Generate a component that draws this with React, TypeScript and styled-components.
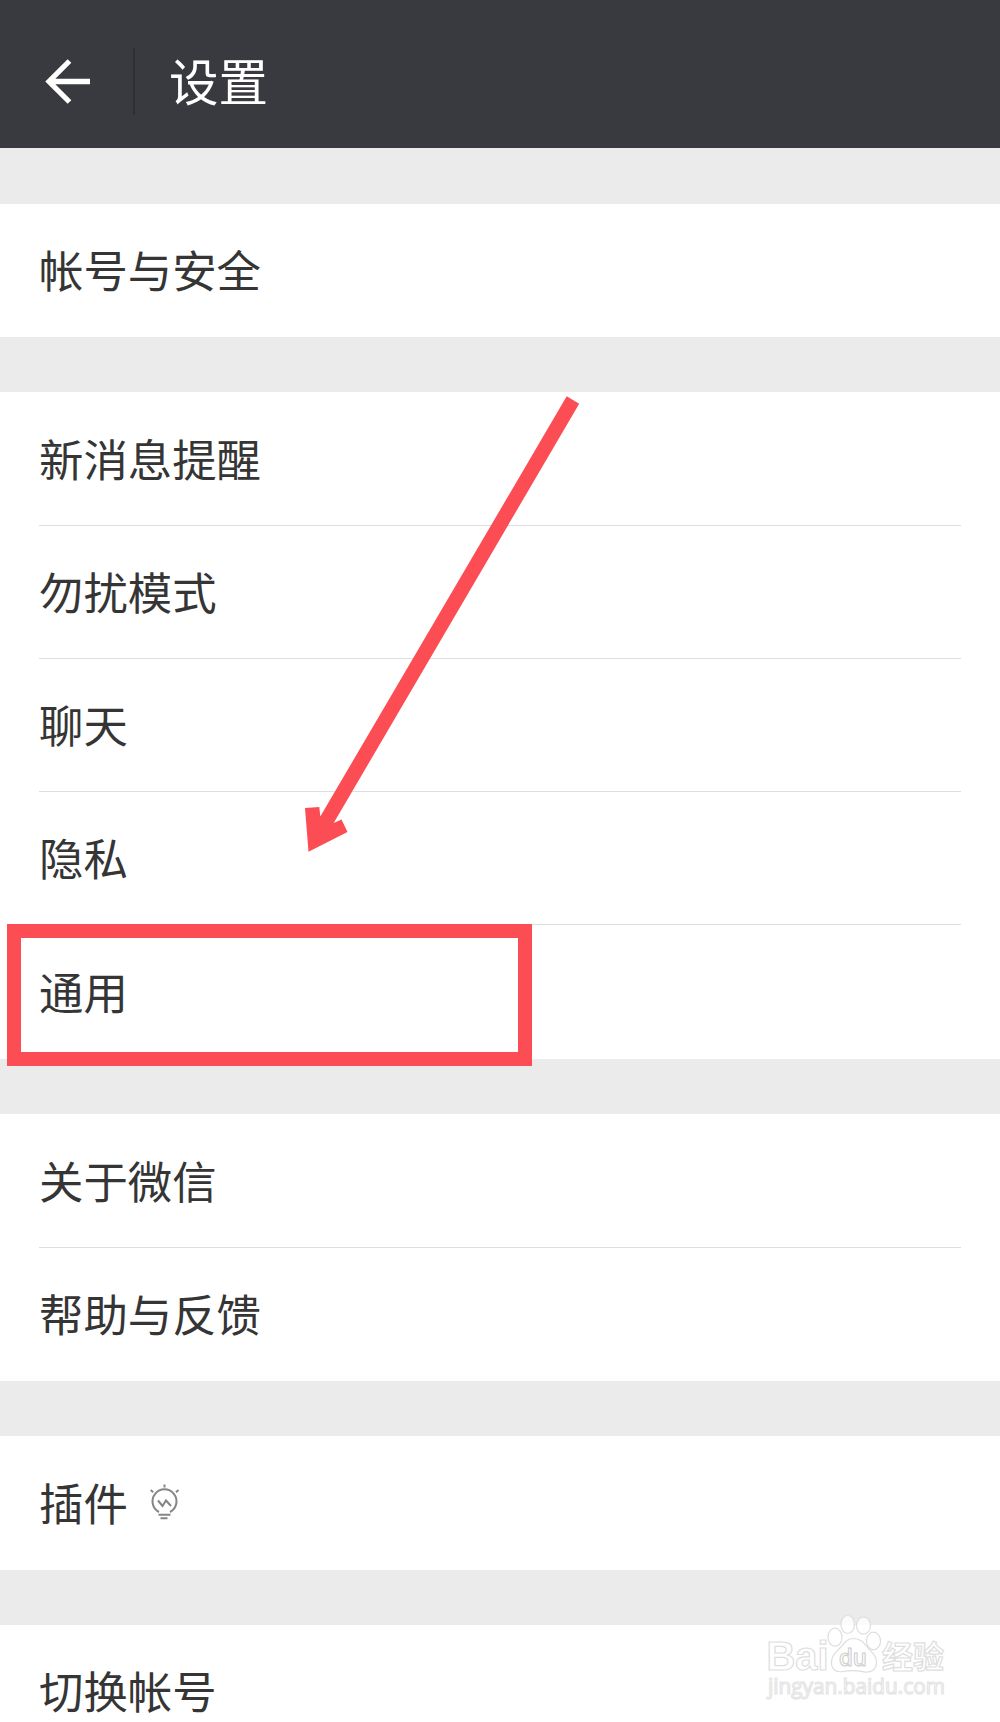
import React from "react";
import styled, { createGlobalStyle } from "styled-components";

const Global = createGlobalStyle`
  body { margin: 0; background: #ebebeb; overflow: hidden; }
  * { box-sizing: border-box; }
`;

const Screen = styled.div`
  position: relative;
  width: 1000px;
  height: 1722px;
  overflow: hidden;
  background: #ebebeb;
  color: #353535;
  font-family: "Noto Sans CJK SC", sans-serif;
`;

const Header = styled.header`
  display: flex;
  align-items: center;
  height: 148px;
  padding: 14px 0 0 45px;
  background: #393a3f;
  color: #fff;
`;

const BackIcon = styled.svg`
  width: 46px;
  height: 46px;
  flex: none;
`;

const HeaderDivider = styled.span`
  width: 2px;
  height: 67px;
  margin: 0 34px 0 42px;
  background: #2e2f33;
`;

const Title = styled.h1`
  margin: 0;
  padding-bottom: 2px;
  font-size: 49.5px;
  font-weight: 400;
  line-height: 66px;
`;

const List = styled.main`
  display: flex;
  flex-direction: column;
  gap: 55.6px;
  padding-top: 55.6px;
`;

const Group = styled.section`
  flex: none;
  padding: 0 39px;
  background: #fff;
`;

const Row = styled.div`
  display: flex;
  align-items: center;
  gap: 21.5px;
  height: 133.25px;
  padding-bottom: 1.8px;
  border-bottom: 1px solid #dedede;
  font-size: 44.4px;
  line-height: 60px;
  &:last-child { border-bottom-color: transparent; }
`;

const Bulb = styled.svg`
  width: 32px;
  height: 38px;
  flex: none;
`;

const Highlight = styled.div`
  position: absolute;
  left: 7px;
  top: 924px;
  width: 525px;
  height: 142px;
  border: 14px solid #fb4d53;
`;

const Pointer = styled.svg`
  position: absolute;
  left: 300px;
  top: 390px;
  width: 290px;
  height: 470px;
`;

const Watermark = styled.svg`
  position: absolute;
  left: 760px;
  top: 1610px;
  width: 195px;
  height: 96px;
`;

const groups: string[][] = [
  ["帐号与安全"],
  ["新消息提醒", "勿扰模式", "聊天", "隐私", "通用"],
  ["关于微信", "帮助与反馈"],
  ["插件"],
  ["切换帐号"],
];

const BulbIcon = () => (
  <Bulb viewBox="0 0 32 38" fill="none" stroke="#858585" strokeWidth="2">
    <path d="M10 29 A12 12 0 1 1 21 29" />
    <path d="M9 17.5 L13.5 23 L17 17.5 L22 23" />
    <path d="M9.5 31.7H21.5M11.5 35.3H18.5M15.5 1.5V4.5M1.7 7L4.2 9.2M29.5 7L27 9.2" />
  </Bulb>
);

export default function App() {
  return (
    <>
      <Global />
      <Screen>
        <Header>
          <BackIcon viewBox="0 0 46 46" fill="none" stroke="#fff" strokeWidth="5.3">
            <path d="M24.5 3L4 23.5L24.5 44M4 23.5H45" />
          </BackIcon>
          <HeaderDivider />
          <Title>设置</Title>
        </Header>
        <List>
          {groups.map((rows) => (
            <Group key={rows[0]}>
              {rows.map((label) => (
                <Row key={label}>
                  <span>{label}</span>
                  {label === "插件" && <BulbIcon />}
                </Row>
              ))}
            </Group>
          ))}
        </List>
        <Highlight />
        <Pointer viewBox="300 390 290 470">
          <path
            fill="#fb4d53"
            d="M566.7 396.3L579.2 403.7L333.7 823L341.5 819.5L347.5 832L308.5 851.7L305 808L319.3 807L320.3 816.5Z"
          />
        </Pointer>
        <Watermark
          viewBox="760 1610 195 96"
          fill="#fff"
          fillOpacity="0.8"
          stroke="#dedede"
          strokeWidth="1.2"
          fontFamily='"Open Sans", sans-serif'
        >
          <text x="766.5" y="1670" fontSize="40" fontWeight="700" fontFamily='"Liberation Sans", sans-serif' textLength="62" lengthAdjust="spacingAndGlyphs">Bai</text>
          <ellipse cx="835" cy="1637.2" rx="7" ry="9" />
          <ellipse cx="847.7" cy="1624.5" rx="6.8" ry="9" />
          <ellipse cx="863.5" cy="1625.5" rx="7" ry="8.7" />
          <ellipse cx="873.5" cy="1641" rx="7" ry="8.8" />
          <path d="M853.5 1638.5C846 1638.5 843.5 1645 839 1649C834 1653.5 830.5 1658 831.5 1664C832.5 1670.5 837 1672.5 843 1671.5C850 1670.3 857 1670.3 864 1671.8C871 1673 876 1670 876.5 1663C877 1656 872 1652.5 868 1648C864.5 1643.5 861 1638.5 853.5 1638.5Z" />
          <text x="839" y="1665.5" fontSize="24" fontWeight="600" stroke="#cfcfcf" textLength="28" lengthAdjust="spacingAndGlyphs">du</text>
          <text x="882" y="1668" fontSize="31" fontWeight="700" fontFamily='"Noto Sans CJK SC", sans-serif' textLength="62">经验</text>
          <text x="768" y="1693.5" fontSize="21" fontWeight="400" stroke="#e4e4e4" textLength="177" lengthAdjust="spacingAndGlyphs">jingyan.baidu.com</text>
        </Watermark>
      </Screen>
    </>
  );
}
